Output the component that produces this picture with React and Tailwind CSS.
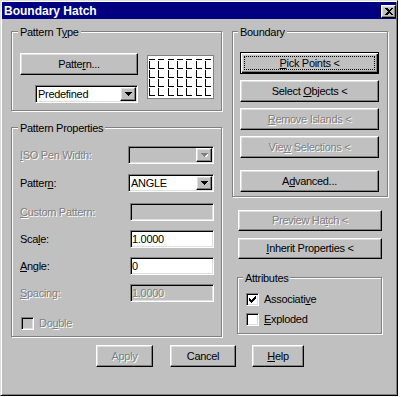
import React from 'react';

const face = 'bg-[#c0c0c0]';
const raised =
  'border border-t-white border-l-white border-r-black border-b-black shadow-[inset_-1px_-1px_0_#808080,inset_1px_1px_0_#dfdfdf]';
const sunken =
  'border border-t-[#808080] border-l-[#808080] border-r-white border-b-white shadow-[inset_1px_1px_0_#000,inset_-1px_-1px_0_#dfdfdf]';
const dim = 'text-[#808080] [text-shadow:1px_1px_0_#fff]';

function Group({ label, labelLeft = 'left-[6px]', className = '', children }) {
  return (
    <div className={`relative border border-[#808080] shadow-[inset_1px_1px_0_#fff,1px_1px_0_#fff] ${className}`}>
      <span className={`absolute -top-[6px] ${labelLeft} bg-[#c0c0c0] px-[2px] leading-[13px]`}>{label}</span>
      {children}
    </div>
  );
}

function Btn({ children, disabled, className = '' }) {
  return (
    <button
      type="button"
      className={`flex items-center justify-center ${raised} ${face} ${disabled ? dim : ''} ${className}`}
    >
      <span>{children}</span>
    </button>
  );
}

function Arrow({ disabled }) {
  return (
    <svg width="7" height="4" viewBox="0 0 7 4" shapeRendering="crispEdges">
      {disabled && <path d="M1 1H8V2H7V3H6V4H5V5H4V4H3V3H2V2H1Z" fill="#fff" />}
      <path d="M0 0H7V1H6V2H5V3H4V4H3V3H2V2H1V1H0Z" fill={disabled ? '#808080' : '#000'} />
    </svg>
  );
}

function Combo({ value, disabled, className = '' }) {
  return (
    <div className={`flex p-[1px] ${sunken} ${disabled ? face : 'bg-white'} ${className}`}>
      <span className="flex-1 pl-[1px] flex items-center">{value}</span>
      <span className={`w-[16px] flex items-center justify-center ${raised} ${face}`}>
        <Arrow disabled={disabled} />
      </span>
    </div>
  );
}

function Field({ value, disabled, className = '' }) {
  return (
    <div className={`flex items-center pl-[1px] ${sunken} ${disabled ? `${face} ${dim}` : 'bg-white'} ${className}`}>
      {value}
    </div>
  );
}

// win95 check mark, row by row
const tick = [
  [6, 0, 1], [5, 1, 2], [0, 2, 1], [4, 2, 3], [0, 3, 2], [3, 3, 3], [0, 4, 5], [1, 5, 3], [2, 6, 1],
];

function Check({ checked, disabled }) {
  return (
    <span className={`w-[13px] h-[13px] flex items-center justify-center ${sunken} ${disabled ? face : 'bg-white'}`}>
      {checked && (
        <svg width="7" height="7" viewBox="0 0 7 7" shapeRendering="crispEdges">
          {tick.map(([x, y, w]) => (
            <rect key={`${x}-${y}`} x={x} y={y} width={w} height="1" fill="#000" />
          ))}
        </svg>
      )}
    </span>
  );
}

function HatchPreview() {
  const cols = [1, 10, 20, 29, 38, 48, 57];
  const rows = [3, 12, 21, 30, 39];
  let d = '';
  cols.forEach((x) => {
    rows.forEach((y, j) => {
      if (j === 0) d += `M${x} ${y + 0.5}h6`;
      else d += `M${x + 0.5} ${rows[j - 1] + 2}V${y + 0.5}H${x + 6}`;
    });
  });
  return (
    <svg width="65" height="42" viewBox="0 0 65 42" shapeRendering="crispEdges">
      <path d={d} stroke="#000" strokeWidth="1" fill="none" />
    </svg>
  );
}

function Row({ className = '', children }) {
  return <div className={`flex items-center justify-between h-[18px] ${className}`}>{children}</div>;
}

export default function App() {
  return (
    <div className="w-[401px] h-[397px] bg-white font-['Liberation_Sans',Arial,sans-serif] text-[11px] leading-[13px] tracking-[-0.3px] text-black">
      <div className="w-[398px] h-[396px] bg-[#c0c0c0] border border-t-[#dfdfdf] border-l-[#dfdfdf] border-r-black border-b-black shadow-[inset_1px_1px_0_#fff,inset_-1px_-1px_0_#808080] p-[1px] flex flex-col">
        {/* title bar */}
        <div className="h-[17px] bg-[#000080] flex items-center justify-between pl-[2px] pt-[1px]">
          <span className="text-white font-bold text-[12px] leading-[14px] tracking-normal">Boundary Hatch</span>
          <button type="button" className={`w-[15px] h-[13px] flex items-center justify-center ${raised} ${face}`}>
            <svg width="8" height="7" viewBox="0 0 8 7" shapeRendering="crispEdges">
              <path d="M0 0H2L4 2L6 0H8L5 3.5L8 7H6L4 5L2 7H0L3 3.5Z" fill="#000" />
            </svg>
          </button>
        </div>

        <div className="flex items-start pl-[9px] mt-[12px]">
          {/* left column */}
          <div className="w-[211px] flex flex-col">
            <Group label={<>Pattern T<u>y</u>pe</>} className="h-[80px] flex items-start pl-[8px] pt-[21px]">
              <div className="w-[118px] flex flex-col items-end gap-[10px]">
                <Btn className="w-[118px] h-[22px]">
                  Patte<u>r</u>n...
                </Btn>
                <Combo value="Predefined" className="w-[103px] h-[18px]" />
              </div>
              <div className="ml-[9px] mt-[2px] w-[67px] h-[44px] bg-white border border-[#808080]">
                <HatchPreview />
              </div>
            </Group>

            <Group
              label="Pattern Properties"
              className="mt-[16px] h-[210px] pt-[18px] pl-[8px] pr-[7px] flex flex-col"
            >
              <Row>
                <span className={dim}>
                  <u>I</u>SO Pen Width:
                </span>
                <Combo disabled className="w-[86px] h-[18px]" />
              </Row>
              <Row className="mt-[10px]">
                <span>
                  Patter<u>n</u>:
                </span>
                <Combo value="ANGLE" className="w-[86px] h-[18px]" />
              </Row>
              <Row className="mt-[11px]">
                <span className={dim}>
                  <u>C</u>ustom Pattern:
                </span>
                <Field disabled className="w-[84px] h-[18px]" />
              </Row>
              <Row className="mt-[9px]">
                <span>
                  Sca<u>l</u>e:
                </span>
                <Field value="1.0000" className="w-[84px] h-[18px]" />
              </Row>
              <Row className="mt-[9px]">
                <span>
                  <u>A</u>ngle:
                </span>
                <Field value="0" className="w-[84px] h-[18px]" />
              </Row>
              <Row className="mt-[9px]">
                <span className={dim}>
                  <u>S</u>pacing:
                </span>
                <Field value="1.0000" disabled className="w-[84px] h-[18px]" />
              </Row>
              <div className="mt-[15px] pl-[1px] flex items-center gap-[5px]">
                <Check disabled />
                <span className={dim}>
                  Do<u>u</u>ble
                </span>
              </div>
            </Group>
          </div>

          {/* right column */}
          <div className="ml-[10px] w-[156px] flex flex-col">
            <Group
              label="Boundary"
              labelLeft="left-[5px]"
              className="h-[166px] pt-[20px] pl-[7px] flex flex-col gap-[6px]"
            >
              <button
                type="button"
                className="w-[139px] h-[22px] p-[3px] flex border border-black bg-[#c0c0c0] shadow-[inset_1px_1px_0_#fff,inset_-1px_-1px_0_#000,inset_-2px_-2px_0_#808080,inset_2px_2px_0_#dfdfdf]"
              >
                <span className="flex-1 flex items-center justify-center border border-dotted border-black">
                  <span>
                    <u>P</u>ick Points &lt;
                  </span>
                </span>
              </button>
              <Btn className="w-[139px] h-[22px]">
                Select <u>O</u>bjects &lt;
              </Btn>
              <Btn disabled className="w-[139px] h-[22px]">
                <u>R</u>emove Islands &lt;
              </Btn>
              <Btn disabled className="w-[139px] h-[22px]">
                Vie<u>w</u> Selections &lt;
              </Btn>
              <Btn className="w-[139px] h-[22px] mt-[6px]">
                A<u>d</u>vanced...
              </Btn>
            </Group>

            <Btn disabled className="ml-[6px] mt-[13px] w-[144px] h-[21px]">
              Preview Ha<u>t</u>ch &lt;
            </Btn>
            <Btn className="ml-[6px] mt-[7px] w-[144px] h-[21px]">
              <u>I</u>nherit Properties &lt;
            </Btn>

            <Group
              label="Attributes"
              labelLeft="left-[5px]"
              className="ml-[5px] mt-[18px] w-[145px] h-[57px] pt-[15px] pl-[8px] flex flex-col gap-[7px]"
            >
              <div className="flex items-center gap-[5px]">
                <Check checked />
                <span>
                  Associati<u>v</u>e
                </span>
              </div>
              <div className="flex items-center gap-[5px]">
                <Check />
                <span>
                  <u>E</u>xploded
                </span>
              </div>
            </Group>
          </div>
        </div>

        {/* dialog buttons */}
        <div className="flex mt-[8px] pl-[94px]">
          <Btn disabled className="w-[57px] h-[22px]">
            Apply
          </Btn>
          <Btn className="ml-[17px] w-[66px] h-[22px]">Cancel</Btn>
          <Btn className="ml-[16px] w-[52px] h-[22px]">
            <u>H</u>elp
          </Btn>
        </div>
      </div>
    </div>
  );
}
